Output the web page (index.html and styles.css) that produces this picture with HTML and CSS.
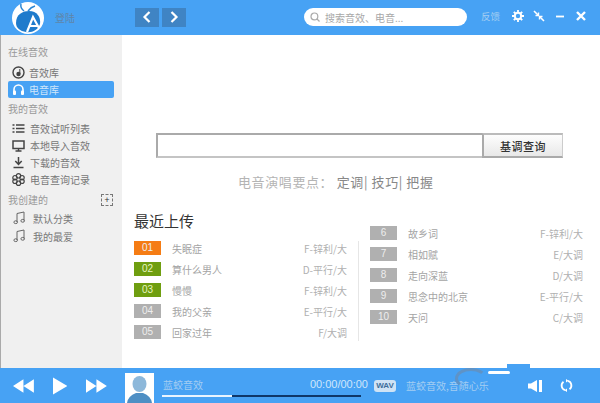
FILE: index.html
```html
<!DOCTYPE html>
<html lang="zh">
<head>
<meta charset="utf-8">
<title>蓝蛟音效</title>
<link rel="stylesheet" href="styles.css">
</head>
<body>
<div class="app">
  <header class="top">
    <svg class="logo" width="34" height="34" viewBox="0 0 34 34">
      <circle cx="17" cy="17" r="16" fill="#fff"/>
      <path d="M5 22 C5 13 12 10 18 10 C26 10 30 16 29 23 C27 29 21 32 15 31 C9 30 5 27 5 22 Z" fill="#1f7bcc"/>
      <path d="M13 10 Q9 7 10 3 M17 10 Q20 6 24 5" stroke="#2a86d4" stroke-width="1.5" fill="none"/>
      <path d="M16 31 L22 16 L28 27 M19 25 H27" stroke="#fff" stroke-width="2.2" fill="none"/>
    </svg>
    <span class="login">登陆</span>
    <div class="navs">
      <button class="nav"><svg width="10" height="12" viewBox="0 0 10 12"><path d="M7.5 1 L2.5 6 L7.5 11" stroke="#fff" stroke-width="2.2" fill="none"/></svg></button>
      <button class="nav"><svg width="10" height="12" viewBox="0 0 10 12"><path d="M2.5 1 L7.5 6 L2.5 11" stroke="#fff" stroke-width="2.2" fill="none"/></svg></button>
    </div>
    <div class="search">
      <svg width="10" height="10" viewBox="0 0 10 10"><circle cx="4.4" cy="4.4" r="3.4" stroke="#aaa" stroke-width="1.2" fill="none"/><path d="M7 7 L9.5 9.5" stroke="#aaa" stroke-width="1.2"/></svg>
      <span>搜索音效、电音...</span>
    </div>
    <span class="feedback">反馈</span>
    <div class="winctl">
      <svg width="12" height="12" viewBox="0 0 12 12"><circle cx="6" cy="6" r="3.2" stroke="#fff" stroke-width="2" fill="none"/><path d="M6 0 V2.5 M6 9.5 V12 M0 6 H2.5 M9.5 6 H12 M1.8 1.8 L3.5 3.5 M8.5 8.5 L10.2 10.2 M1.8 10.2 L3.5 8.5 M8.5 3.5 L10.2 1.8" stroke="#fff" stroke-width="1.8"/></svg>
      <svg width="12" height="12" viewBox="0 0 12 12"><path d="M1 1 L5 5 M7 7 L11 11" stroke="#fff" stroke-width="1.6"/><path d="M2.5 5.5 H5.5 V2.5 M6.5 9.5 V6.5 H9.5" stroke="#fff" stroke-width="1.4" fill="none"/></svg>
      <svg width="12" height="12" viewBox="0 0 12 12"><path d="M2 6.5 H10" stroke="#fff" stroke-width="1.8"/></svg>
      <svg width="12" height="12" viewBox="0 0 12 12"><path d="M2 2 L10 10 M10 2 L2 10" stroke="#fff" stroke-width="2.4"/></svg>
    </div>
  </header>

  <div class="body">
    <aside class="side">
      <h4 class="side-title first">在线音效</h4>
      <a class="item lib">
        <svg width="13" height="13" viewBox="0 0 13 13"><circle cx="6.5" cy="6.5" r="5.5" stroke="#444" stroke-width="1.4" fill="none"/><circle cx="6.5" cy="8" r="2.2" fill="#444"/><path d="M7.8 3 V8" stroke="#444"/></svg>
        <span>音效库</span>
      </a>
      <a class="item active">
        <svg width="13" height="13" viewBox="0 0 13 13"><path d="M2 9 V6.5 a4.5 4.5 0 0 1 9 0 V9" stroke="#fff" stroke-width="1.6" fill="none"/><rect x="1" y="7.5" width="3" height="4.5" rx="1" fill="#fff"/><rect x="9" y="7.5" width="3" height="4.5" rx="1" fill="#fff"/></svg>
        <span>电音库</span>
      </a>
      <h4 class="side-title mine">我的音效</h4>
      <a class="item sub">
        <svg width="13" height="13" viewBox="0 0 13 13"><path d="M0.5 3 H2.5 M4 3 H12.5 M0.5 6.5 H2.5 M4 6.5 H12.5 M0.5 10 H2.5 M4 10 H12.5" stroke="#444" stroke-width="1.5"/></svg>
        <span>音效试听列表</span>
      </a>
      <a class="item sub">
        <svg width="13" height="13" viewBox="0 0 13 13"><rect x="1" y="2" width="11" height="7.5" stroke="#444" stroke-width="1.5" fill="none"/><path d="M6.5 9.5 V12 M3.5 12 H9.5" stroke="#444" stroke-width="1.4"/></svg>
        <span>本地导入音效</span>
      </a>
      <a class="item sub">
        <svg width="13" height="13" viewBox="0 0 13 13"><path d="M6.5 1 V8 M3.3 5 L6.5 8.4 L9.7 5 M1.5 11.5 H11.5" stroke="#444" stroke-width="1.5" fill="none"/></svg>
        <span>下载的音效</span>
      </a>
      <a class="item sub">
        <svg width="13" height="13" viewBox="0 0 13 13"><g fill="none" stroke="#444" stroke-width="1.2"><circle cx="6.5" cy="2.8" r="2.2"/><circle cx="6.5" cy="10.2" r="2.2"/><circle cx="3" cy="4.7" r="2.2"/><circle cx="10" cy="4.7" r="2.2"/><circle cx="3" cy="8.3" r="2.2"/><circle cx="10" cy="8.3" r="2.2"/></g></svg>
        <span>电音查询记录</span>
      </a>
      <div class="side-row">
        <h4 class="side-title flat">我创建的</h4>
        <span class="plus">+</span>
      </div>
      <a class="item song">
        <svg width="13" height="14" viewBox="0 0 13 14"><path d="M4 11 V2.5 L11 1 V9.5" stroke="#666" fill="none"/><ellipse cx="2.7" cy="11.2" rx="1.8" ry="1.4" stroke="#666" fill="none"/><ellipse cx="9.7" cy="9.8" rx="1.8" ry="1.4" stroke="#666" fill="none"/></svg>
        <span>默认分类</span>
      </a>
      <a class="item song">
        <svg width="13" height="14" viewBox="0 0 13 14"><path d="M4 11 V2.5 L11 1 V9.5" stroke="#666" fill="none"/><ellipse cx="2.7" cy="11.2" rx="1.8" ry="1.4" stroke="#666" fill="none"/><ellipse cx="9.7" cy="9.8" rx="1.8" ry="1.4" stroke="#666" fill="none"/></svg>
        <span>我的最爱</span>
      </a>
    </aside>

    <main class="main">
      <div class="query">
        <div class="query-input"></div>
        <button class="query-btn">基调查询</button>
      </div>
      <p class="tips">电音演唱要点： <b>定调| 技巧| 把握</b></p>
      <section class="recent">
        <div class="col left">
          <h2>最近上传</h2>
          <ul class="rows">
            <li><i class="badge orange">01</i><span class="name">失眠症</span><span class="key">F-锌利/大</span></li>
            <li><i class="badge green">02</i><span class="name">算什么男人</span><span class="key">D-平行/大</span></li>
            <li><i class="badge green">03</i><span class="name">慢慢</span><span class="key">F-锌利/大</span></li>
            <li><i class="badge">04</i><span class="name">我的父亲</span><span class="key">E-平行/大</span></li>
            <li><i class="badge">05</i><span class="name">回家过年</span><span class="key">F/大调</span></li>
          </ul>
        </div>
        <div class="col right">
          <ul class="rows">
            <li><i class="badge">6</i><span class="name">故乡词</span><span class="key">F-锌利/大</span></li>
            <li><i class="badge">7</i><span class="name">相如赋</span><span class="key">E/大调</span></li>
            <li><i class="badge">8</i><span class="name">走向深蓝</span><span class="key">D/大调</span></li>
            <li><i class="badge">9</i><span class="name">思念中的北京</span><span class="key">E-平行/大</span></li>
            <li><i class="badge">10</i><span class="name">天问</span><span class="key">C/大调</span></li>
          </ul>
        </div>
      </section>
    </main>
  </div>

  <footer class="player">
    <div class="controls">
      <svg width="22" height="14" viewBox="0 0 22 14"><path d="M11 0 V14 L0 7 Z M22 0 V14 L11 7 Z" fill="#fff"/></svg>
      <svg width="15" height="18" viewBox="0 0 15 18"><path d="M0 0 L15 9 L0 18 Z" fill="#fff"/></svg>
      <svg width="22" height="14" viewBox="0 0 22 14"><path d="M0 0 V14 L11 7 Z M11 0 V14 L22 7 Z" fill="#fff"/></svg>
    </div>
    <svg class="avatar" width="29" height="30" viewBox="0 0 29 30">
      <rect width="29" height="30" fill="#fff"/>
      <ellipse cx="14.5" cy="11" rx="7" ry="8" fill="#8db8da"/>
      <path d="M2 30 Q3 23 11 20 H18 Q26 23 27 30 Z" fill="#4e8fc4"/>
    </svg>
    <div class="track">
      <div class="track-info">
        <span class="track-name">蓝蛟音效</span>
        <span class="time">00:00/00:00</span>
      </div>
      <div class="bar"><div class="bar-fill"></div></div>
    </div>
    <span class="wav">WAV</span>
    <span class="slogan">蓝蛟音效,音随心乐</span>
    <svg class="vol" width="15" height="12" viewBox="0 0 15 12"><path d="M0 3.5 H3 L9 0 V12 L3 8.5 H0 Z" fill="#fff"/><rect x="11" y="0" width="3" height="12" fill="#fff"/></svg>
    <svg class="loop" width="13" height="13" viewBox="0 0 13 13"><path d="M3.5 2.8 A4.8 4.8 0 0 0 5 11.2 M9.5 10.2 A4.8 4.8 0 0 0 8 1.8" stroke="#fff" stroke-width="1.8" fill="none"/><path d="M6 0 L8.6 1.8 L6 3.6 Z M7 9.4 L4.4 11.2 L7 13 Z" fill="#fff"/></svg>
    <span class="mark"></span>
  </footer>
</div>
</body>
</html>
```
FILE: styles.css
```css
* { box-sizing: border-box; margin: 0; padding: 0; }
html, body { width: 600px; height: 403px; overflow: hidden; }
body { font-family: "Noto Sans CJK SC", "Liberation Sans", sans-serif; background: #fff; }
.app { width: 600px; height: 403px; display: flex; flex-direction: column; }

.top { height: 35px; flex: none; background: #47a2f4; display: flex; align-items: center; padding-left: 11px; }
.logo { flex: none; margin-top: 1px; }
.login { margin-left: 10px; width: 35px; font-size: 10px; color: #5f86aa; }
.navs { display: flex; gap: 3px; margin-left: 45px; margin-top: -1px; }
.nav { width: 24px; height: 19px; border: 0; background: #3f84c4; display: flex; align-items: center; justify-content: center; }
.search { margin-left: 118px; margin-top: -1px; width: 163px; height: 18px; border-radius: 9px; background: #fff; display: flex; align-items: center; gap: 5px; padding-left: 6px; font-size: 10px; color: #a8a8a8; }
.feedback { margin-left: 14px; width: 20px; font-size: 9.5px; color: #a3cdf2; margin-top: -4px; }
.winctl { margin-left: 11px; display: flex; gap: 9px; margin-top: -4px; }

.body { flex: 1; display: flex; min-height: 0; }
.side { width: 122px; flex: none; background: #f0f0f0; border-left: 1px solid #aaa; padding: 0 8px 0 7px; }
.side-title { font-weight: 400; font-size: 10px; line-height: 14px; color: #999; padding-top: 10px; }
.side-title.mine { padding-top: 4px; margin-bottom: 4px; }
.side-title.flat { padding-top: 0; }
.item { display: flex; align-items: center; gap: 4px; height: 17px; padding-left: 4px; font-size: 10px; color: #777; }
.item.sub { gap: 5px; }
.item.lib { margin-top: 5px; }
.item.active { background: #47a2f4; color: #cfe6fb; border-radius: 2px; }
.item span { white-space: nowrap; }
.side-row { display: flex; align-items: center; justify-content: space-between; margin-top: 3px; padding-right: 1px; height: 18px; }
.plus { width: 12px; height: 12px; border: 1px dashed #777; font-size: 9px; line-height: 9px; text-align: center; color: #333; }
.item.song { height: 18px; padding-left: 5px; gap: 7px; }

.main { flex: 1; padding: 98px 17px 0 12px; }
.query { display: flex; margin-left: 22px; width: 407px; height: 25px; }
.query-input { flex: 1; background: #fff; border: 2px solid #aaa; border-right: 0; border-bottom-color: #c4c4c4; }
.query-btn { width: 81px; height: 25px; border: 1px solid #ccc; border-top: 2px solid #bbb; border-bottom: 2px solid #aaa; border-left: 2px solid #aaa; background: linear-gradient(#fdfdfd, #e8e8e8); font: 500 11px "Noto Sans CJK SC", sans-serif; color: #333; letter-spacing: .5px; }
.tips { margin-top: 15px; margin-left: 104px; font-size: 13px; line-height: 18px; color: #b4b4b4; white-space: nowrap; letter-spacing: .6px; }
.tips b { font-weight: 400; color: #888; }

.recent { display: flex; margin-top: 20px; }
.col.left { width: 225px; flex: none; }
.col.right { flex: 1; padding-left: 11px; padding-top: 15px; }
.col h2 { font-weight: 400; font-size: 15px; line-height: 20px; color: #333; margin-bottom: 10px; }
.rows { list-style: none; display: flex; flex-direction: column; gap: 7px; }
.left .rows { padding-right: 11px; border-right: 1px solid #e6e6e6; height: 100px; }
.rows li { height: 14px; display: flex; align-items: center; font-size: 10px; color: #a4a4a4; }
.badge { width: 27px; height: 14px; flex: none; background: #b0b0b0; color: #eee; font-style: normal; text-align: center; font-family: "Liberation Sans", sans-serif; font-size: 10px; line-height: 14px; }
.badge.orange { background: #f57c14; }
.badge.green { background: #6f9e10; color: #e8f5c0; }
.name { margin-left: 11px; flex: 1; }
.key { color: #b0b0b0; }

.player { position: relative; height: 35px; flex: none; background: #47a2f4; display: flex; align-items: center; padding-left: 13px; }
.controls { display: flex; align-items: center; gap: 19px; width: 94px; flex: none; }
.avatar { flex: none; margin-left: 18px; margin-top: 5px; }
.track { width: 206px; margin-left: 8px; flex: none; padding-top: 2px; }
.track-info { display: flex; justify-content: space-between; align-items: center; height: 16px; padding-left: 1px; }
.track-name { font-size: 10px; color: #a3cdf2; }
.time { font-family: "Liberation Sans", sans-serif; font-size: 11px; color: #cfe6fb; }
.bar { height: 2px; margin-top: 3px; margin-right: 7px; background: #0f3768; }
.bar-fill { width: 70px; height: 2px; background: #e8f4ff; }
.wav { margin-left: 6px; width: 22px; height: 12px; border-radius: 3px; background: #cfe3f5; color: #3f6f9c; font: 700 8px/12px "Liberation Sans", sans-serif; text-align: center; }
.slogan { margin-left: 10px; width: 122px; font-size: 10px; color: #a3cdf2; white-space: nowrap; }
.vol { flex: none; }
.loop { flex: none; margin-left: 17px; }
.mark { position: absolute; left: 488px; top: 3px; width: 22px; height: 3px; background: #fff; border-radius: 2px; }
.mark::before { content: ""; position: absolute; left: -33px; top: -3px; width: 26px; height: 15px; border: 3px solid #5f93c6; border-right-color: transparent; border-bottom-color: transparent; border-radius: 50%; }
.mark::after { content: ""; position: absolute; left: 19px; top: -7px; width: 23px; height: 4px; background: #47a2f4; }
```
